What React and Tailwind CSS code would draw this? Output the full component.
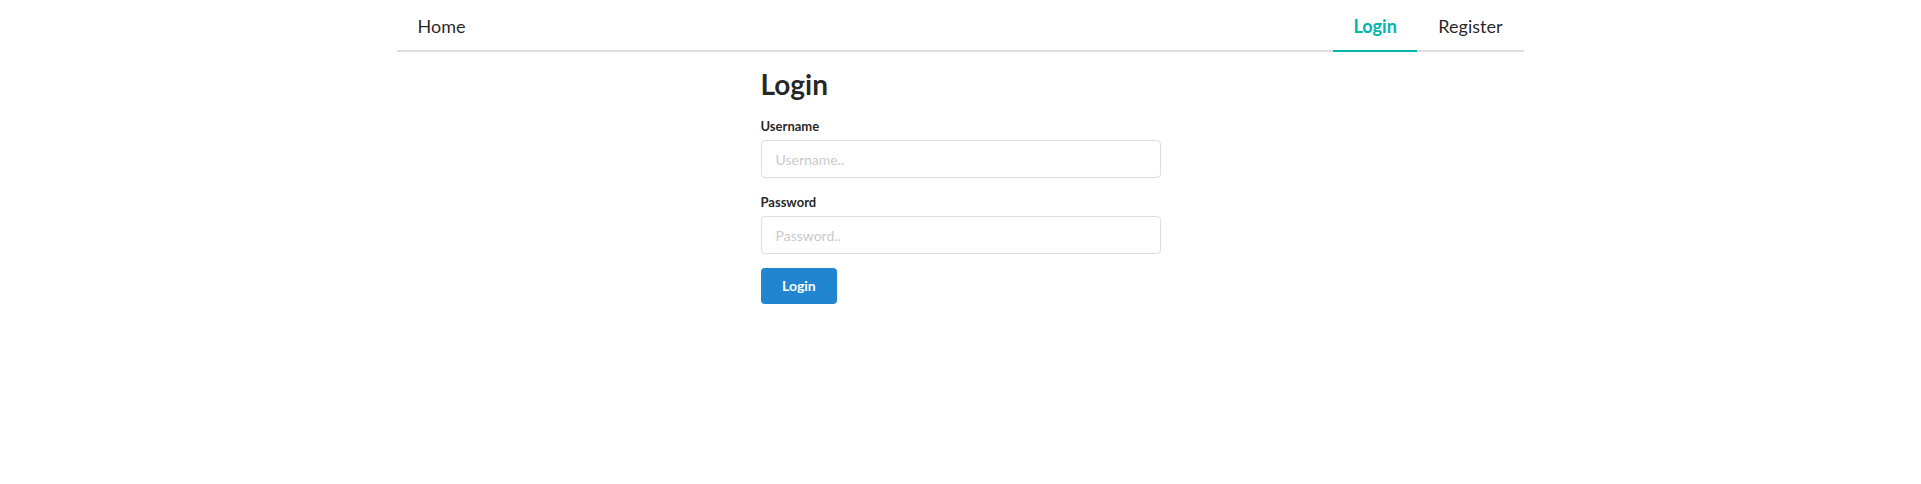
import React from "react";

export default function App() {
  return (
    <div className="min-h-[484px] bg-white font-['Lato','Liberation_Sans',sans-serif] text-[14px] leading-[20px] text-[rgba(0,0,0,0.87)]">
      <nav className="mx-auto flex w-[1127px] border-b-2 border-[#dedede] text-[18px] leading-none">
        <a className="-mb-[2px] border-b-2 border-transparent px-[20.5px] pb-[15.5px] pt-[16.5px] text-[rgba(0,0,0,0.87)]">
          Home
        </a>
        <div className="ml-auto flex">
          <a className="-mb-[2px] border-b-2 border-[#00b5ad] px-[20px] pb-[15.5px] pt-[16.5px] font-bold text-[#00b5ad]">
            Login
          </a>
          <a className="-mb-[2px] border-b-2 border-transparent px-[21.5px] pb-[15.5px] pt-[16.5px] text-[rgba(0,0,0,0.87)]">
            Register
          </a>
        </div>
      </nav>
      <div className="mx-auto mt-[14px] w-[400px]">
        <h2 className="mb-[14px] text-[28px] font-bold leading-[36px]">Login</h2>
        <form className="flex flex-col gap-[14px]">
          <div className="flex flex-col">
            <label className="mb-[4px] text-[13px] font-bold leading-[20px]">Username</label>
            <input
              placeholder="Username.."
              className="h-[38px] rounded-[4px] border border-[rgba(34,36,38,0.15)] px-[14px] text-[14px] outline-none placeholder:text-[rgba(191,191,191,0.87)]"
            />
          </div>
          <div className="flex flex-col">
            <label className="mb-[4px] text-[13px] font-bold leading-[20px]">Password</label>
            <input
              type="password"
              placeholder="Password.."
              className="h-[38px] rounded-[4px] border border-[rgba(34,36,38,0.15)] px-[14px] text-[14px] outline-none placeholder:text-[rgba(191,191,191,0.87)]"
            />
          </div>
          <div>
            <button
              type="button"
              className="h-[36px] rounded-[4px] bg-[#2185d0] px-[21.5px] text-[14px] font-bold leading-none text-white"
            >
              Login
            </button>
          </div>
        </form>
      </div>
    </div>
  );
}
